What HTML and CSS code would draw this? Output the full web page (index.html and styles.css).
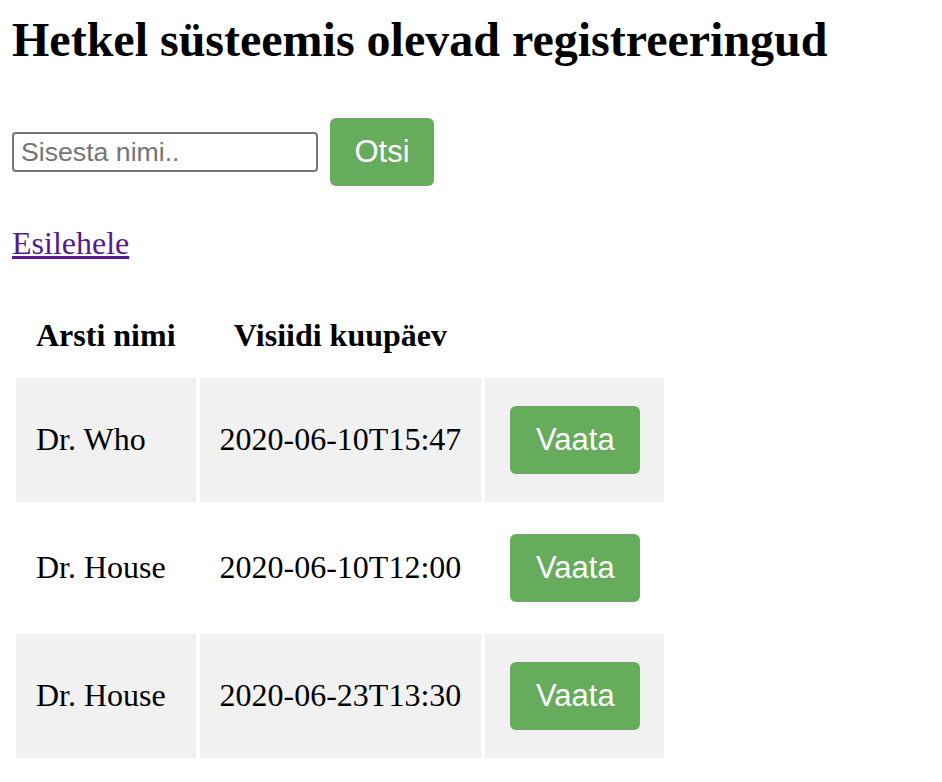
FILE: index.html
```html
<!DOCTYPE html>
<html lang="et">
<head>
<meta charset="utf-8">
<title>Registreeringud</title>
<link rel="stylesheet" href="styles.css">
</head>
<body>
<h1 class="title">Hetkel süsteemis olevad registreeringud</h1>
<form class="search">
  <input class="search-input" type="text" placeholder="Sisesta nimi..">
  <button class="btn btn-search" type="button">Otsi</button>
</form>
<p class="back"><a class="back-link" href="#">Esilehele</a></p>
<table class="list">
  <thead>
    <tr>
      <th class="col-head">Arsti nimi</th>
      <th class="col-head">Visiidi kuupäev</th>
      <th class="col-head"></th>
    </tr>
  </thead>
  <tbody>
    <tr class="row shaded">
      <td class="cell">Dr. Who</td>
      <td class="cell">2020-06-10T15:47</td>
      <td class="cell"><button class="btn btn-view" type="button">Vaata</button></td>
    </tr>
    <tr class="row">
      <td class="cell">Dr. House</td>
      <td class="cell">2020-06-10T12:00</td>
      <td class="cell"><button class="btn btn-view" type="button">Vaata</button></td>
    </tr>
    <tr class="row shaded">
      <td class="cell">Dr. House</td>
      <td class="cell">2020-06-23T13:30</td>
      <td class="cell"><button class="btn btn-view" type="button">Vaata</button></td>
    </tr>
  </tbody>
</table>
</body>
</html>
```
FILE: styles.css
```css
html, body {
  background: #ffffff;
}
body {
  margin: 12px;
  font-family: "Liberation Serif", "Times New Roman", serif;
  font-size: 32px;
  color: #000;
}
.title {
  margin: 0;
  font-size: 48px;
  font-weight: bold;
  line-height: 1.15;
}
.search {
  margin: 51px 0 0;
  display: flex;
  align-items: center;
  gap: 12px;
}
.search-input {
  box-sizing: border-box;
  width: 306px;
  height: 40px;
  margin: 0;
  padding: 0 7px;
  border: 2px solid #767676;
  border-radius: 4px;
  font-family: "Liberation Sans", Arial, sans-serif;
  font-size: 26.67px;
  color: #000;
  background: #fff;
}
.search-input::placeholder {
  color: #757575;
}
.btn {
  box-sizing: border-box;
  height: 68px;
  padding: 0 24px;
  border: none;
  border-radius: 6px;
  background: #67ac5c;
  color: #ffffff;
  font-family: "Liberation Sans", Arial, sans-serif;
  font-size: 31px;
  line-height: 68px;
  cursor: pointer;
}
.btn-search {
  width: 104px;
  margin: 0;
}
.back {
  margin: 39px 0 0;
  line-height: 1.15;
}
.back-link {
  color: #551a8b;
  text-decoration: underline;
}
.list {
  margin-top: 31px;
  border-collapse: separate;
  border-spacing: 4px;
}
.col-head {
  padding: 20px;
  text-align: center;
  font-weight: bold;
  line-height: 1.15;
}
.cell {
  padding: 20px;
  text-align: left;
  line-height: 1.15;
}
.shaded .cell {
  background: #f1f1f1;
}
.btn-view {
  display: block;
  width: 130px;
  margin: 8px 4px 8px 5px;
}
```
